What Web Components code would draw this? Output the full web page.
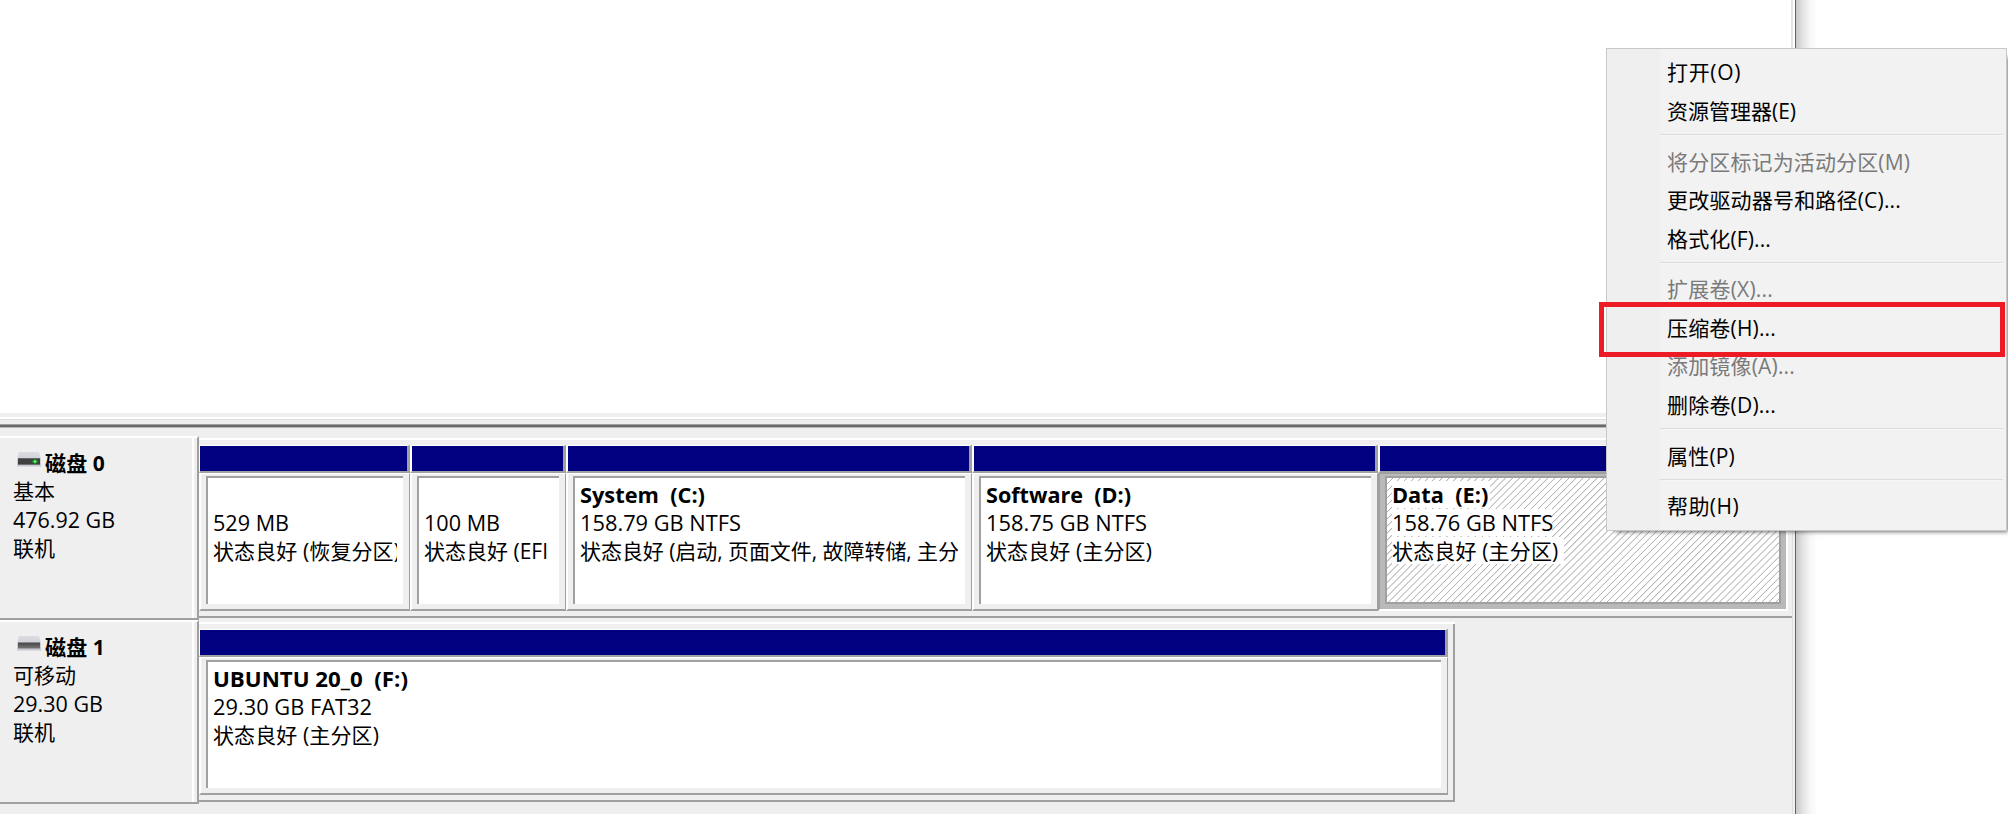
<!DOCTYPE html>
<html lang="zh-CN">
<head>
<meta charset="utf-8">
<title>磁盘管理</title>
<style>
html,body{margin:0;height:100%;overflow:hidden;background:#fff}
body{font:21px/28px "Open Sans","Noto Sans CJK SC",sans-serif;color:#000}
</style>
</head>
<body>
<disk-manager></disk-manager>
<script>
const define=(name,css,html,ready)=>{
  const t=document.createElement('template');
  t.innerHTML=`<style>${css}</style>${html}`;
  customElements.define(name,class extends HTMLElement{
    constructor(){super();this.attachShadow({mode:'open'}).append(t.content.cloneNode(true));}
    connectedCallback(){if(ready)ready(this,this.shadowRoot);}
  });
};

/* One line of text set to an exact advance width: Latin lines are condensed, mixed lines are tracked. */
define('fit-text',`
:host{display:block;white-space:pre;height:28px}
:host([bold]){font-weight:700}
span{display:inline-block;transform-origin:0 50%}`,
`<span></span>`,(el,root)=>{
  const s=root.querySelector('span'),text=el.getAttribute('text'),w=+el.getAttribute('w');
  s.textContent=text;
  const n=s.offsetWidth?s.getBoundingClientRect().width:0;
  if(!w||!n)return;
  if(/[\u4e00-\u9fff]/.test(text))s.style.letterSpacing=(w-n)/text.length+'px';
  else s.style.transform=`scaleX(${w/n})`;
});

define('disk-icon',`:host{display:block;width:25px;height:16px}svg{display:block}.led{display:none}:host([online]) .led{display:block}`,
`<svg width="25" height="16" viewBox="0 0 25 16">
<defs><linearGradient id="a" x2="0" y2="1"><stop stop-color="#dadce0"/><stop offset="1" stop-color="#c6c9cf"/></linearGradient>
<linearGradient id="b" x2="0" y2="1"><stop stop-color="#444"/><stop offset="1" stop-color="#777"/></linearGradient></defs>
<path d="M2 0H22L24 7V14.5H0V7Z" fill="url(#a)"/><path d="M1 6.5H23V12.5H1Z" fill="url(#b)"/>
<g class="led"><path d="M1 6.5H23V12.5H1Z" fill="#404040"/><path d="M15 9.4H21M18 7V12" stroke="#168c22" stroke-width="2"/><circle cx="18" cy="9.4" r="1.5" fill="#58f35e"/></g></svg>`);

define('disk-label',`
:host{display:block;box-sizing:border-box;height:184px;background:#efefef;border-top:2px solid #fff;border-bottom:2px solid #a0a0a0;border-right:2px solid #a0a0a0;padding-right:3px}
.face{box-sizing:border-box;height:100%;border-right:2px solid #fff;padding:11px 0 0 13px}
.head{display:flex;height:28.3px}
.head disk-icon{margin:3px 3px 0 4px}
.lines{display:grid;grid-auto-rows:28.3px}`,
`<div class="face"><div class="head"><disk-icon></disk-icon><slot name="name"></slot></div><div class="lines"><slot></slot></div></div>`,
(el,root)=>root.querySelector('disk-icon').toggleAttribute('online',el.hasAttribute('online')));

define('disk-volume',`
:host{display:flex;flex-direction:column;min-width:0;height:166px}
.bar{box-sizing:border-box;height:28px;background:#000080;border:solid #a0a0a0;border-width:1px 3px 2px 2px;border-top-color:#fff;border-left-color:#fff}
:host([first]) .bar{border-left-width:1px}
.frame{box-sizing:border-box;flex:1;min-height:0;background:#efefef;border:solid #a0a0a0;border-width:1px 1px 2px 2px;border-top-color:#fff;border-left-color:#fff;padding:2px 6px 5px 5px;display:grid}
.box{min-width:0;background:#fff;border:solid #a0a0a0;border-width:2px 0 0 2px;overflow:hidden;padding:3px 6px 0 5px}
.clip{overflow:hidden;display:grid;grid-auto-rows:27.9px}
:host([selected]) .frame{background:#b9b9b9;border-color:#a0a0a0 #fff #fff #a0a0a0;border-width:1px 2px 2px 2px;padding:2px 5px 5px 5px}
:host([selected]) .box{border-width:2px;background:repeating-linear-gradient(135deg,#fff 0 3.5px,#b4b4b4 3.95px 4.25px,#fff 4.98px)}
:host([selected]) .clip{justify-items:start}
:host([selected]) ::slotted(fit-text){background:#fff;height:27px}`,
`<div class="bar"></div><div class="frame"><div class="box"><div class="clip"><slot></slot></div></div></div>`);

define('disk-strip',`
:host{display:grid;box-sizing:border-box;height:180px;border-top:2px solid #fff;border-bottom:2px solid #a0a0a0;background:#efefef;padding-top:5px;margin-top:2px}`,
`<slot></slot>`,el=>{
  el.style.gridTemplateColumns=el.getAttribute('cols');
  if(el.hasAttribute('narrow')){el.style.width='1256px';el.style.boxShadow='inset -2px 0 #a0a0a0';}
});

define('menu-item',`
:host{display:flex;box-sizing:border-box;align-items:center;height:38.5px;padding:0 0 2px 60px}
:host([disabled]){color:#7a7a7a}`,`<slot></slot>`);

define('menu-separator',`
:host{display:block;box-sizing:border-box;height:12.3px;padding:3px 3px 0 53px}
div{height:1px;background:#dcdcdc;border-bottom:1px solid #f6f6f6}`,`<div></div>`);

define('context-menu',`
:host{display:block;box-sizing:border-box;width:401px;height:483px;border:1px solid #c8c8c8;background:linear-gradient(90deg,#efefef 53px,#f2f2f2 53px);padding-top:5px;box-shadow:5px 5px 4px -4px rgba(0,0,0,.55)}`,`<slot></slot>`);

define('disk-manager',`
:host{display:block;position:relative;width:2008px;height:814px;overflow:hidden}
.desktop{display:flex;height:814px}
.window{width:1795px;flex:none;display:flex;flex-direction:column;box-sizing:border-box;background:#efefef}
.edge{width:1px;flex:none;background:#1377cc}
.shade{width:22px;background:linear-gradient(90deg,#c8c8c8,#e2e2e2 30%,#f7f7f7 65%,#fff)}
.list{height:413px;background:linear-gradient(90deg,#fff 1791px,#e3e3e3 1791px 1793px,#fff 1793px)}
.split{height:23px;box-sizing:border-box;background:linear-gradient(#efefef 4px,#fff 4px 6px,#dfdfdf 6px 7px,#efefef 7px 11px,#a0a0a0 11px 12px,#696969 12px 14px,#b8b8b8 14px 15px,#efefef 15px);margin-right:3px}
.graph{height:378px;box-sizing:border-box;border-right:1px solid #e0e0e0;margin-right:2px}
.row{display:grid;grid-template-columns:199px 1fr;height:184px}
context-menu{position:absolute;left:1606px;top:48px}
.mark{position:absolute;left:1599px;top:302px;width:406px;height:55px;box-sizing:border-box;border:5px solid #ed1c24}`,
`<div class="desktop"><div class="window">
<div class="list"></div><div class="split"></div>
<div class="graph">
<div class="row">
<disk-label online><fit-text slot="name" bold text="磁盘 0" w="60"></fit-text><fit-text text="基本" w="42"></fit-text><fit-text text="476.92 GB" w="102"></fit-text><fit-text text="联机" w="42"></fit-text></disk-label>
<disk-strip cols="211px 156px 406px 406px 410px">
<disk-volume first><fit-text text=" "></fit-text><fit-text text="529 MB" w="76"></fit-text><fit-text text="状态良好 (恢复分区)" w="187"></fit-text></disk-volume>
<disk-volume><fit-text text=" "></fit-text><fit-text text="100 MB" w="76"></fit-text><fit-text text="状态良好 (EFI" w="124"></fit-text></disk-volume>
<disk-volume><fit-text bold text="System  (C:)" w="125"></fit-text><fit-text text="158.79 GB NTFS" w="161"></fit-text><fit-text text="状态良好 (启动, 页面文件, 故障转储, 主分" w="379"></fit-text></disk-volume>
<disk-volume><fit-text bold text="Software  (D:)" w="145"></fit-text><fit-text text="158.75 GB NTFS" w="161"></fit-text><fit-text text="状态良好 (主分区)" w="166"></fit-text></disk-volume>
<disk-volume selected><fit-text bold text="Data  (E:) " w="102"></fit-text><fit-text text="158.76 GB NTFS " w="167"></fit-text><fit-text text="状态良好 (主分区) " w="172"></fit-text></disk-volume>
</disk-strip></div>
<div class="row">
<disk-label><fit-text slot="name" bold text="磁盘 1" w="60"></fit-text><fit-text text="可移动" w="63"></fit-text><fit-text text="29.30 GB" w="90"></fit-text><fit-text text="联机" w="42"></fit-text></disk-label>
<disk-strip narrow cols="1249px">
<disk-volume first><fit-text bold text="UBUNTU 20_0  (F:)" w="195"></fit-text><fit-text text="29.30 GB FAT32" w="159"></fit-text><fit-text text="状态良好 (主分区)" w="166"></fit-text></disk-volume>
</disk-strip></div>
</div></div><div class="edge"></div><div class="shade"></div></div>
<context-menu>
<menu-item><fit-text text="打开(O)" w="74"></fit-text></menu-item>
<menu-item><fit-text text="资源管理器(E)" w="129"></fit-text></menu-item>
<menu-separator></menu-separator>
<menu-item disabled><fit-text text="将分区标记为活动分区(M)" w="243"></fit-text></menu-item>
<menu-item><fit-text text="更改驱动器号和路径(C)..." w="234"></fit-text></menu-item>
<menu-item><fit-text text="格式化(F)..." w="104"></fit-text></menu-item>
<menu-separator></menu-separator>
<menu-item disabled><fit-text text="扩展卷(X)..." w="106"></fit-text></menu-item>
<menu-item><fit-text text="压缩卷(H)..." w="109"></fit-text></menu-item>
<menu-item disabled><fit-text text="添加镜像(A)..." w="128"></fit-text></menu-item>
<menu-item><fit-text text="删除卷(D)..." w="109"></fit-text></menu-item>
<menu-separator></menu-separator>
<menu-item><fit-text text="属性(P)" w="68"></fit-text></menu-item>
<menu-separator></menu-separator>
<menu-item><fit-text text="帮助(H)" w="72"></fit-text></menu-item>
</context-menu><div class="mark"></div>`);
</script>
</body>
</html>
